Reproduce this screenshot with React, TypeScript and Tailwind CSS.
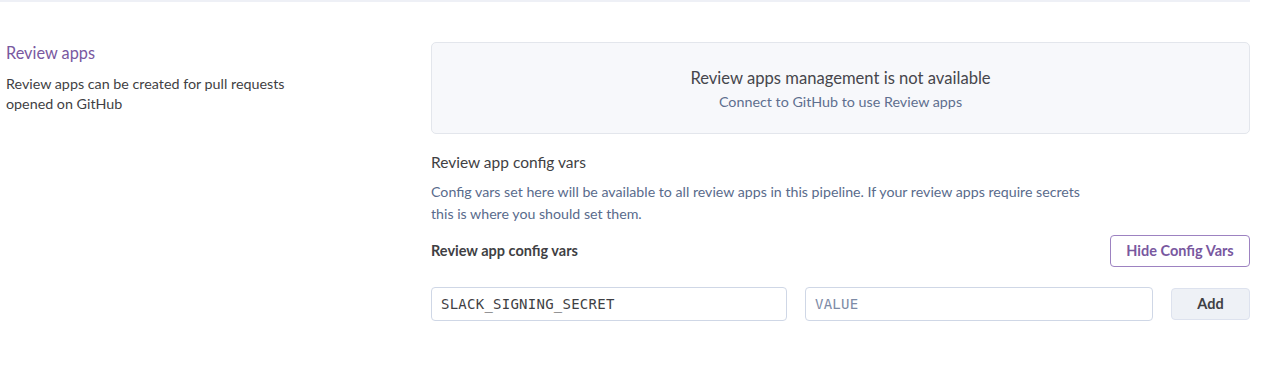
import React from 'react';

const font = "font-['Lato','Noto_Sans',sans-serif]";

const ReviewAppsSection = () => {
  return (
    <section className={`w-[1250px] border-t-2 border-[#eef0f6] pt-[40px] ${font}`}>
      <div className="flex">
        <div className="w-[431px] shrink-0 pl-[6px]">
          <h2 className="text-[16.3px] leading-[22px] text-[#79589f]">Review apps</h2>
          <p className="mt-[10px] text-[14.3px] leading-[20px] text-[#3f3f44] w-[300px]">
            Review apps can be created for pull requests opened on GitHub
          </p>
        </div>

        <div className="flex-1">
          <div className="h-[92px] pt-[2px] rounded-[5px] border border-[#e3e6ec] bg-[#f7f8fb] flex flex-col items-center justify-center">
            <div className="text-[16.6px] leading-[22px] text-[#46464c]">Review apps management is not available</div>
            <div className="mt-[3px] text-[14.3px] leading-[20px] text-[#5e6f8f]">Connect to GitHub to use Review apps</div>
          </div>

          <h3 className="mt-[17px] text-[15.5px] leading-[22px] text-[#3f3f44]">Review app config vars</h3>
          <p className="mt-[8px] max-w-[670px] text-[14.2px] leading-[22px] text-[#596b8c]">
            Config vars set here will be available to all review apps in this pipeline. If your review apps require secrets
            this is where you should set them.
          </p>

          <div className="mt-[10px] flex items-center justify-between">
            <span className="text-[14.5px] font-bold text-[#3f3f44]">Review app config vars</span>
            <button className="h-[32px] w-[140px] rounded-[4px] border border-[#9d82c1] bg-white text-[14.5px] font-bold text-[#79589f]">
              Hide Config Vars
            </button>
          </div>

          <div className="mt-[20px] flex items-center gap-[18px] font-['DejaVu_Sans_Mono',monospace] text-[14px] tracking-[0.25px]">
            <div className="h-[34px] w-[356px] flex items-center rounded-[4px] border border-[#cfd7e6] px-[9px] text-[#3f3f44]">
              SLACK_SIGNING_SECRET
            </div>
            <div className="h-[34px] flex-1 flex items-center rounded-[4px] border border-[#cfd7e6] px-[9px] text-[#7d8ba6]">
              VALUE
            </div>
            <button className={`h-[32px] w-[79px] rounded-[4px] border border-[#dde2ee] bg-[#eef1f6] text-[14.5px] tracking-normal font-bold text-[#3f3f44] ${font}`}>
              Add
            </button>
          </div>
        </div>
      </div>
    </section>
  );
};

export default function App() {
  return (
    <div className="min-h-screen bg-white">
      <ReviewAppsSection />
    </div>
  );
}
